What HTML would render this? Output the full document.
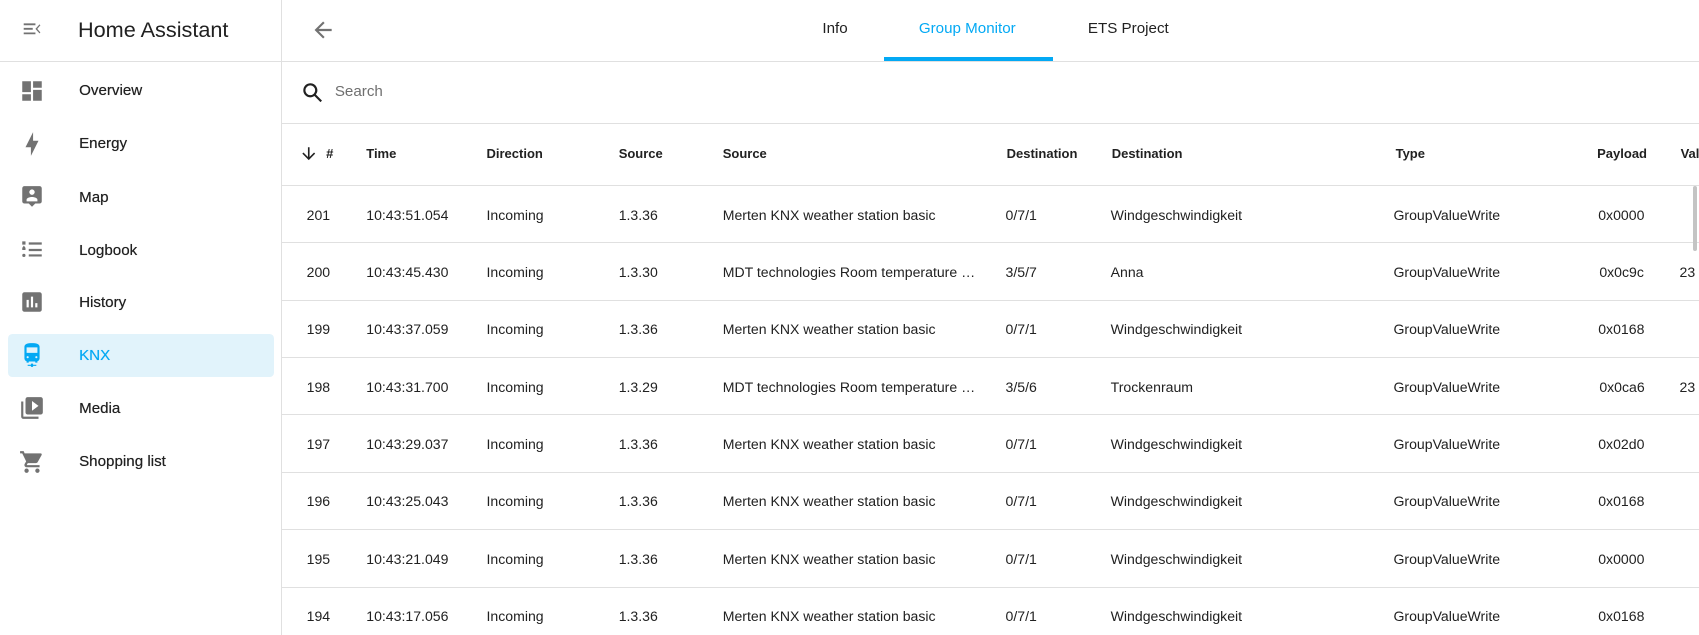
<!DOCTYPE html>
<html><head><meta charset="utf-8"><style>
html,body{margin:0;padding:0;background:#fff;overflow:hidden}
body{width:1699px;height:635px}
#w{zoom:1.08355;width:1568px;height:586px;position:relative;font-family:"Liberation Sans",sans-serif;color:#212121}
.sb{position:absolute;left:0;top:0;width:259px;height:586px;border-right:1px solid #e0e0e0}
.sbh{height:56px;border-bottom:1px solid #e0e0e0;position:relative}
.sbh .t{position:absolute;left:72px;top:16px;font-size:20px}
.it{position:absolute;left:7px;width:246px;height:40px;border-radius:4px}
.it span{position:absolute;left:66px;top:12px;font-size:14px;color:#212121;text-shadow:0 0 0.4px #212121}
.it svg{position:absolute;left:11px;top:8px}
.it.sel{background:#e1f3fb}.it.sel span{color:#03a9f4;text-shadow:0 0 0.4px #03a9f4}
.mn{position:absolute;left:260px;top:0;right:0;height:586px}
.tb{height:56px;border-bottom:1px solid #e0e0e0;position:relative}
.tab{position:absolute;top:18px;font-size:14px;color:#212121}
.srch{height:57px;border-bottom:1px solid #e0e0e0;position:relative}
.c{position:absolute;font-size:13px;white-space:nowrap}
.hr{height:56px;border-bottom:1px solid #e0e0e0;position:relative}
.hr .c{top:20px;font-weight:bold;font-size:12px}
.r{height:52px;border-bottom:1px solid #e0e0e0;position:relative}
.r .c{top:19px}
</style></head><body><div id="w">
<div class="sb">
<div class="sbh"><svg style="position:absolute;left:19px;top:17px" width="20" height="20" viewBox="0 0 24 24"><path fill="#727272" d="M3 6h13v2H3zm0 5h10v2H3zm0 5h13v2H3zm17.5-9L16 12l4.5 5 1-1-3.5-4 3.5-4z"/></svg><div class="t">Home Assistant</div></div>
<div class="it" style="top:64px"><svg width="24" height="24" viewBox="0 0 24 24"><path fill="#727272" d="M13 3v6h8V3m-8 18h8V11h-8M3 21h8v-6H3m0-2h8V3H3v10z"/></svg><span>Overview</span></div>
<div class="it" style="top:113px"><svg width="24" height="24" viewBox="0 0 24 24"><path fill="#727272" d="M11 15H6l7-14v8h5l-7 14v-8z"/></svg><span>Energy</span></div>
<div class="it" style="top:162px"><svg width="24" height="24" viewBox="0 0 24 24"><path fill="#727272" d="M19 2H5a2 2 0 00-2 2v12a2 2 0 002 2h4l3 3 3-3h4a2 2 0 002-2V4a2 2 0 00-2-2m-7 3a2.5 2.5 0 110 5 2.5 2.5 0 010-5m5 11H7v-1.5c0-1.7 3.3-2.5 5-2.5s5 .8 5 2.5z"/></svg><span>Map</span></div>
<div class="it" style="top:211px"><svg width="24" height="24" viewBox="0 0 24 24"><path fill="#727272" d="M3 4h3v3H3zm6 1h12v2H9zm-6 5l1.5-2L6 10v2H3zm6 1h12v2H9zm-6 6a1.5 1.5 0 113 0 1.5 1.5 0 01-3 0zm6-1h12v2H9z"/></svg><span>Logbook</span></div>
<div class="it" style="top:259px"><svg width="24" height="24" viewBox="0 0 24 24"><path fill="#727272" d="M19 3H5a2 2 0 00-2 2v14a2 2 0 002 2h14a2 2 0 002-2V5a2 2 0 00-2-2M9 17H7v-7h2v7m4 0h-2V7h2v10m4 0h-2v-4h2v4z"/></svg><span>History</span></div>
<div class="it sel" style="top:308px"><svg width="24" height="24" viewBox="0 0 24 24"><path fill="#03a9f4" d="M12 1C8 1 5 1.8 5 4.5V15c0 1.3.8 2.4 2 2.8V19h2v-1h6v1h2v-1.2c1.2-.4 2-1.5 2-2.8V4.5C19 1.8 16 1 12 1M7 5h10v5H7zm1 10a1 1 0 110-2 1 1 0 010 2m8 0a1 1 0 110-2 1 1 0 010 2M8 21h8v1H8zm3-1h2v3h-2z"/></svg><span>KNX</span></div>
<div class="it" style="top:357px"><svg width="24" height="24" viewBox="0 0 24 24"><path fill="#727272" d="M4 6H2v14a2 2 0 002 2h14v-2H4V6m16-4H8a2 2 0 00-2 2v12a2 2 0 002 2h12a2 2 0 002-2V4a2 2 0 00-2-2m-8 12.5v-9l6 4.5-6 4.5z"/></svg><span>Media</span></div>
<div class="it" style="top:406px"><svg width="24" height="24" viewBox="0 0 24 24"><path fill="#727272" d="M17 18a2 2 0 110 4 2 2 0 010-4M1 2h3.3l.9 2H20a1 1 0 011 1c0 .2 0 .3-.1.5l-3.6 6.5c-.3.6-1 1-1.7 1H8.1l-.9 1.6v.1a.3.3 0 00.3.2H19v2H7a2 2 0 01-2-2c0-.4.1-.7.2-1l1.4-2.5L3 4H1V2m6 16a2 2 0 110 4 2 2 0 010-4z"/></svg><span>Shopping list</span></div>
</div>
<div class="mn">
<div class="tb"><svg style="position:absolute;left:26px;top:16px" width="24" height="24" viewBox="0 0 24 24"><path fill="#727272" d="M20 11v2H8l5.5 5.5-1.4 1.4L4.2 12l7.9-7.9 1.4 1.4L8 11h12z"/></svg>
<div class="tab" style="left:499px">Info</div>
<div class="tab" style="left:588px;color:#03a9f4">Group Monitor</div>
<div class="tab" style="left:744px">ETS Project</div>
<div style="position:absolute;left:556px;width:156px;top:53px;height:3px;background:#03a9f4"></div></div>
<div class="srch"><svg style="position:absolute;left:17px;top:17px" width="24" height="24" viewBox="0 0 24 24"><path fill="#212121" d="M9.5 3a6.5 6.5 0 015.2 10.4l5.6 5.6-1.4 1.4-5.6-5.6A6.5 6.5 0 119.5 3m0 2a4.5 4.5 0 100 9 4.5 4.5 0 000-9z"/></svg><div style="position:absolute;left:49px;top:20px;font-size:14px;color:#6f6f6f">Search</div></div>
<div class="hr"><svg style="position:absolute;left:16px;top:18px" width="18" height="18" viewBox="0 0 24 24"><path fill="#212121" d="M11 4h2v12l5.5-5.5 1.4 1.4L12 19.8l-7.9-7.9 1.4-1.4L11 16z"/></svg>
<div class="c" style="left:41px">#</div><div class="c" style="left:78px">Time</div><div class="c" style="left:189px">Direction</div><div class="c" style="left:311px">Source</div><div class="c" style="left:407px">Source</div><div class="c" style="left:669px">Destination</div><div class="c" style="left:766px">Destination</div><div class="c" style="left:1028px">Type</div><div class="c" style="left:1214px">Payload</div><div class="c" style="left:1291px">Value</div></div>
<div id="rows"></div>
<div style="position:absolute;left:1302px;top:172px;width:4px;height:60px;border-radius:2px;background:#c4c4c4"></div>
</div>
</div>
<script>
var d=[["201","10:43:51.054","1.3.36","Merten KNX weather station basic","0/7/1","Windgeschwindigkeit","0x0000",""],
["200","10:43:45.430","1.3.30","MDT technologies Room temperature …","3/5/7","Anna","0x0c9c","23"],
["199","10:43:37.059","1.3.36","Merten KNX weather station basic","0/7/1","Windgeschwindigkeit","0x0168",""],
["198","10:43:31.700","1.3.29","MDT technologies Room temperature …","3/5/6","Trockenraum","0x0ca6","23"],
["197","10:43:29.037","1.3.36","Merten KNX weather station basic","0/7/1","Windgeschwindigkeit","0x02d0",""],
["196","10:43:25.043","1.3.36","Merten KNX weather station basic","0/7/1","Windgeschwindigkeit","0x0168",""],
["195","10:43:21.049","1.3.36","Merten KNX weather station basic","0/7/1","Windgeschwindigkeit","0x0000",""],
["194","10:43:17.056","1.3.36","Merten KNX weather station basic","0/7/1","Windgeschwindigkeit","0x0168",""]];
var h="";d.forEach(function(r){var pl=r[7]?1216:1215;
h+='<div class="r"><div class="c" style="left:23px">'+r[0]+'</div><div class="c" style="left:78px">'+r[1]+'</div><div class="c" style="left:189px">Incoming</div><div class="c" style="left:311px">'+r[2]+'</div><div class="c" style="left:407px">'+r[3]+'</div><div class="c" style="left:668px">'+r[4]+'</div><div class="c" style="left:765px">'+r[5]+'</div><div class="c" style="left:1026px">GroupValueWrite</div><div class="c" style="left:'+pl+'px">'+r[6]+'</div><div class="c" style="left:1290px">'+r[7]+'</div></div>';});
document.getElementById("rows").innerHTML=h;
</script>
</body></html>
